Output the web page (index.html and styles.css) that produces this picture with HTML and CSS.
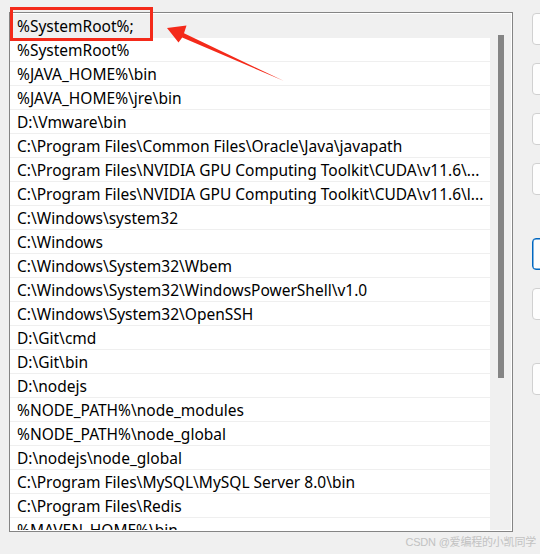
FILE: index.html
```html
<!DOCTYPE html>
<html>
<head>
<meta charset="utf-8">
<link rel="stylesheet" href="styles.css">
</head>
<body>
<div class="page">
  <div class="listbox">
    <div class="rows">
      <div class="row selected">%SystemRoot%;</div>
      <div class="row">%SystemRoot%</div>
      <div class="row">%JAVA_HOME%\bin</div>
      <div class="row">%JAVA_HOME%\jre\bin</div>
      <div class="row">D:\Vmware\bin</div>
      <div class="row">C:\Program Files\Common Files\Oracle\Java\javapath</div>
      <div class="row">C:\Program Files\NVIDIA GPU Computing Toolkit\CUDA\v11.6\...</div>
      <div class="row">C:\Program Files\NVIDIA GPU Computing Toolkit\CUDA\v11.6\l...</div>
      <div class="row">C:\Windows\system32</div>
      <div class="row">C:\Windows</div>
      <div class="row">C:\Windows\System32\Wbem</div>
      <div class="row">C:\Windows\System32\WindowsPowerShell\v1.0</div>
      <div class="row">C:\Windows\System32\OpenSSH</div>
      <div class="row">D:\Git\cmd</div>
      <div class="row">D:\Git\bin</div>
      <div class="row">D:\nodejs</div>
      <div class="row">%NODE_PATH%\node_modules</div>
      <div class="row">%NODE_PATH%\node_global</div>
      <div class="row">D:\nodejs\node_global</div>
      <div class="row">C:\Program Files\MySQL\MySQL Server 8.0\bin</div>
      <div class="row">C:\Program Files\Redis</div>
      <div class="row">%MAVEN_HOME%\bin</div>
    </div>
    <div class="track"><div class="thumb"></div></div>
  </div>
  <div class="buttons">
    <div class="btn"></div>
    <div class="btn"></div>
    <div class="btn"></div>
    <div class="btn"></div>
    <div class="btn primary group"></div>
    <div class="btn"></div>
    <div class="btn group"></div>
  </div>
  <div class="highlight"></div>
  <svg class="arrow" width="540" height="554" viewBox="0 0 540 554">
    <polygon points="167,28 186.5,25.5 184,33.3 284,81 182.2,37.6 178.5,42.5" fill="#f42a1a"/>
  </svg>
  <div class="watermark">CSDN @爱编程的小凯同学</div>
</div>
</body>
</html>
```
FILE: styles.css
```css
html, body {
  margin: 0;
  padding: 0;
  background: #f0f0f0;
}
.page {
  position: relative;
  width: 540px;
  height: 554px;
  overflow: hidden;
  display: flex;
  align-items: flex-start;
  padding: 12px 0 0 9px;
  box-sizing: border-box;
  font-family: "Noto Sans", "Noto Sans CJK SC", sans-serif;
}
.listbox {
  width: 504px;
  height: 520px;
  box-sizing: border-box;
  border: 1px solid #858585;
  background: #fff;
  padding: 1px 1px 1px 0;
  display: flex;
  flex-shrink: 0;
}
.rows {
  width: 480px;
  overflow: hidden;
}
.row {
  height: 23px;
  line-height: 24px;
  border-bottom: 1px solid #efefef;
  padding-left: 7px;
  font-size: 15.5px;
  color: #000;
  white-space: nowrap;
  overflow: hidden;
}
.row.selected {
  background: #f0f0f0;
  border-bottom-color: #f0f0f0;
}
.track {
  width: 21px;
  background: #f0f0f0;
  padding: 21px 0 0 8px;
  box-sizing: border-box;
}
.thumb {
  width: 6px;
  height: 343px;
  background: #858585;
}
.buttons {
  display: flex;
  flex-direction: column;
  gap: 18px;
  margin-left: 19px;
  padding-top: 1px;
}
.btn {
  width: 60px;
  height: 32px;
  box-sizing: border-box;
  border: 1px solid #d0d0d0;
  border-radius: 4px;
  background: #fdfdfd;
  flex-shrink: 0;
}
.btn.group {
  margin-top: 25px;
}
.btn.primary {
  border: 1px solid #0067c0;
  box-shadow: inset 0 0 0 0.5px #0067c0;
}
.highlight {
  position: absolute;
  left: 10px;
  top: 7px;
  width: 143px;
  height: 34px;
  box-sizing: border-box;
  border: 3px solid #f42a1a;
}
.arrow {
  position: absolute;
  left: 0;
  top: 0;
}
.watermark {
  position: absolute;
  right: 4px;
  bottom: 5px;
  font-size: 11px;
  letter-spacing: -0.2px;
  color: #c2c2c2;
  font-family: "Liberation Sans", "Noto Sans CJK SC", sans-serif;
}
```
